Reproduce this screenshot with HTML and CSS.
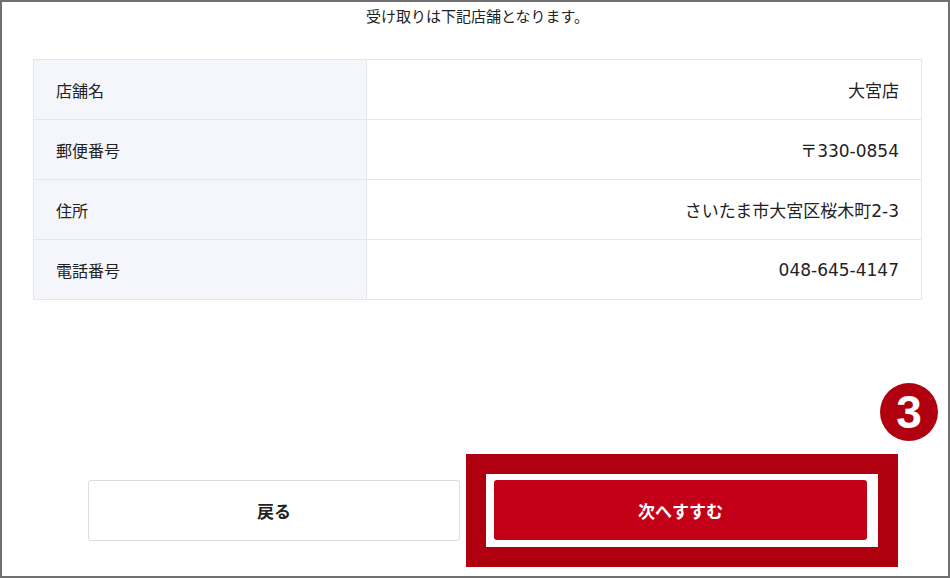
FILE: index.html
```html
<!DOCTYPE html>
<html lang="ja">

<head>
    <meta charset="UTF-8">
    <meta name="viewport" content="width=device-width, initial-scale=1.0">
    <title>受け取り店舗の確認</title>
    <link rel="stylesheet" href="styles.css">
</head>

<body>
    <div class="frame">
        <p class="lead">受け取りは下記店舗となります。</p>

        <table class="store-table">
            <tr>
                <th>店舗名</th>
                <td>大宮店</td>
            </tr>
            <tr>
                <th>郵便番号</th>
                <td>〒330-0854</td>
            </tr>
            <tr>
                <th>住所</th>
                <td>さいたま市大宮区桜木町2-3</td>
            </tr>
            <tr>
                <th>電話番号</th>
                <td>048-645-4147</td>
            </tr>
        </table>

        <div class="actions">
            <button type="button" class="btn btn-back">戻る</button>
            <div class="highlight">
                <div class="highlight-inner">
                    <button type="submit" class="btn btn-next">次へすすむ</button>
                </div>
            </div>
        </div>

        <!-- step marker -->
        <span class="step-badge">3</span>
    </div>
</body>

</html>
```

FILE: styles.css
```css
body {
    margin: 0;
    padding: 0;
    font-family: 'Liberation Sans', 'Noto Sans CJK JP', sans-serif;
    color: #222;
    background-color: #fff;
}

.frame {
    position: relative;
    width: 950px;
    height: 578px;
    box-sizing: border-box;
    border: 2px solid #707070;
    padding: 4px 0 0 31px;
    overflow: hidden;
}

.lead {
    margin: 0;
    width: 889px;
    text-align: center;
    font-size: 15px;
    line-height: 22px;
}

.store-table {
    margin-top: 31px;
    width: 889px;
    border-collapse: collapse;
    table-layout: fixed;
}

.store-table th,
.store-table td {
    height: 60px;
    padding: 0 22px;
    border: 1px solid #e6e6e6;
    font-size: 16px;
    font-weight: normal;
    box-sizing: border-box;
}

.store-table th {
    width: 333px;
    text-align: left;
    background-color: #f4f6fb;
}

.store-table td {
    text-align: right;
    font-family: 'DejaVu Sans', 'Noto Sans CJK JP', sans-serif;
    font-size: 17px;
}

.actions {
    display: flex;
    align-items: center;
    gap: 6px;
    margin-top: 154px;
    padding-left: 55px;
}

.btn {
    height: 60px;
    border-radius: 3px;
    font-family: inherit;
    font-size: 17px;
    font-weight: bold;
    cursor: pointer;
}

.btn-back {
    width: 372px;
    height: 61px;
    background-color: #fff;
    border: 1px solid #dcdcdc;
    color: #222;
}

.highlight {
    border: 20px solid #af0010;
}

.highlight-inner {
    display: flex;
    padding: 6px 11px 7px 8px;
    background-color: #fff;
}

.btn-next {
    width: 373px;
    border: none;
    background-color: #c40019;
    color: #fff;
}

.step-badge {
    position: absolute;
    left: 878px;
    top: 381px;
    width: 58px;
    height: 58px;
    border-radius: 50%;
    background-color: #b0000f;
    color: #fff;
    font-family: 'Liberation Sans', sans-serif;
    font-size: 46px;
    font-weight: bold;
    line-height: 58px;
    text-align: center;
}
```
